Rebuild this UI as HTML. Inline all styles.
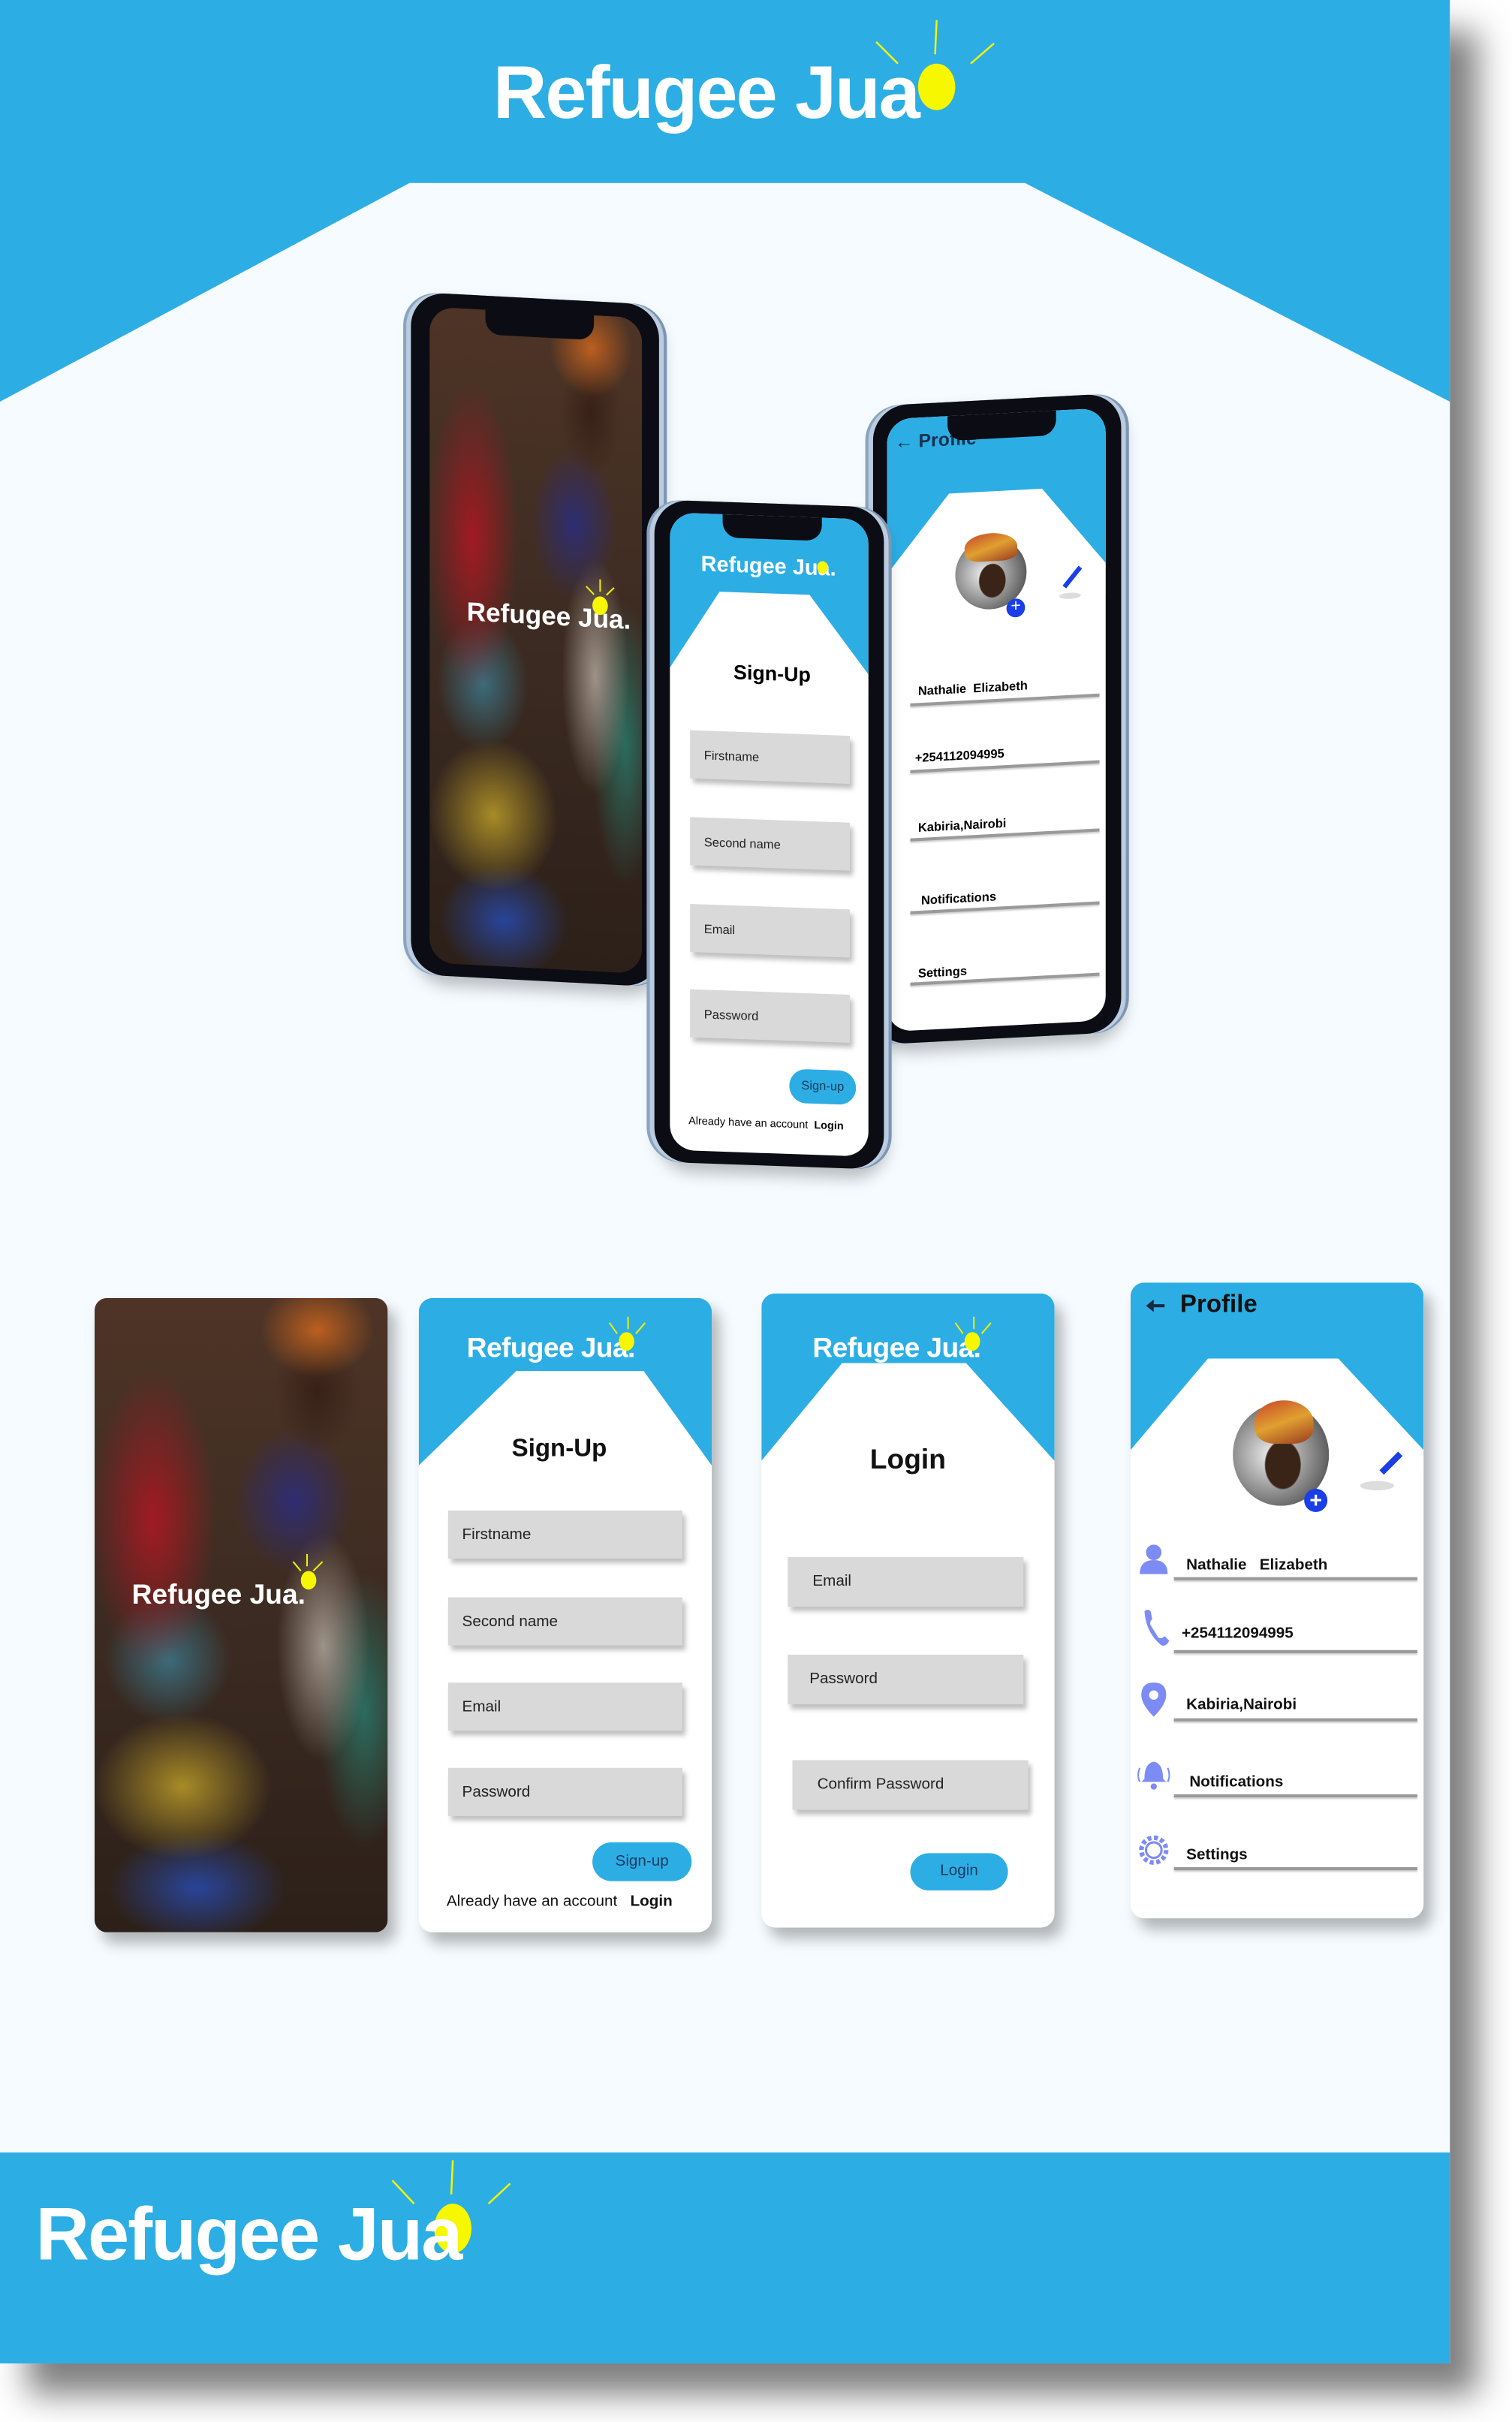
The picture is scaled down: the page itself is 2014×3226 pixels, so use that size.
<!DOCTYPE html>
<html><head><meta charset="utf-8">
<style>
html,body{margin:0;padding:0;background:#fff;width:2014px;height:3226px;overflow:hidden}
#st{position:absolute;left:0;top:0;width:975px;height:1562px;transform:scale(2.0656);transform-origin:0 0;font-family:"Liberation Sans",sans-serif}
.a{position:absolute}
.page{left:0;top:0;width:935px;height:1524px;background:#f5fbfe;box-shadow:18px 20px 20px rgba(0,0,0,.5)}
.card{position:absolute;background:#fff;border-radius:9px;overflow:hidden;box-shadow:5px 7px 9px rgba(0,0,0,.28)}
.t{position:absolute;white-space:nowrap}
.inp{position:absolute;background:#d9d9d9;box-shadow:2px 3px 3px rgba(0,0,0,.25);font-size:10px;color:#222}
.inp span{position:absolute;left:9px;top:50%;transform:translateY(-50%)}
.btn{position:absolute;background:#2caee4;border-radius:14px;color:#1a3a60;font-size:10px;text-align:center}
.phone{position:absolute;border-radius:22px;background:#0c0c14;box-shadow:-3px 0 0 #b9cce0,-5px 0 0 #8aa3c0,3px 0 0 #b9cce0,5px 0 0 #7d95b3,2px 6px 10px rgba(0,0,0,.25)}
.scr{position:absolute;border-radius:16px;overflow:hidden;background:#fff}
.photo{background:
 radial-gradient(ellipse 26% 10% at 76% 5%,rgba(200,100,30,.9),transparent 75%),
 radial-gradient(ellipse 18% 12% at 76% 15%,rgba(55,32,22,1),transparent 80%),
 radial-gradient(ellipse 30% 33% at 20% 35%,rgba(165,25,35,.95),transparent 72%),
 radial-gradient(ellipse 20% 14% at 25% 34%,rgba(75,45,32,1),transparent 80%),
 radial-gradient(ellipse 28% 16% at 68% 32%,rgba(45,45,120,.95),transparent 72%),
 radial-gradient(ellipse 22% 25% at 78% 55%,rgba(175,165,155,.85),transparent 72%),
 radial-gradient(ellipse 30% 14% at 25% 57%,rgba(60,120,140,.85),transparent 72%),
 radial-gradient(ellipse 42% 16% at 30% 77%,rgba(180,150,40,.9),transparent 72%),
 radial-gradient(ellipse 42% 12% at 35% 93%,rgba(40,70,160,.95),transparent 72%),
 radial-gradient(ellipse 22% 30% at 92% 65%,rgba(40,120,105,.85),transparent 72%),
 linear-gradient(#4e3426,#3c2b22 50%,#2c2019) !important;}
.notch{position:absolute;background:#0c0c14;border-radius:0 0 10px 10px}
.ln{position:absolute;height:1.5px;background:#9a9a9a;box-shadow:0 1px 1px rgba(0,0,0,.2)}
</style></head><body>
<div id="st">
<div class="a page"></div>
<svg class="a" style="left:0;top:0" width="935" height="1524">
<rect x="0" y="0" width="935" height="118" fill="#2caee4"/>
<polygon points="0,117 266,117 0,259" fill="#2caee4"/>
<polygon points="659,117 935,117 935,259" fill="#2caee4"/>
<rect x="0" y="1388" width="935" height="136" fill="#2caee4"/>
<line x1="565" y1="27" x2="579" y2="41" stroke="#f5f500" stroke-width="1.2"/>
<line x1="604" y1="13" x2="603" y2="35" stroke="#f5f500" stroke-width="1.2"/>
<line x1="641" y1="28" x2="626" y2="41" stroke="#f5f500" stroke-width="1.2"/>
<ellipse cx="604" cy="56" rx="12" ry="15" fill="#f7f700"/>
<line x1="253" y1="1406" x2="267" y2="1421" stroke="#f5f500" stroke-width="1.2"/>
<line x1="292" y1="1393" x2="291" y2="1415" stroke="#f5f500" stroke-width="1.2"/>
<line x1="329" y1="1408" x2="315" y2="1421" stroke="#f5f500" stroke-width="1.2"/>
<ellipse cx="292" cy="1437" rx="12" ry="16" fill="#f7f700"/>
</svg>
<div class="t" style="left:318px;top:33px;font-size:48px;font-weight:bold;color:#fff;letter-spacing:-1px">Refugee Jua</div>
<div class="t" style="left:23px;top:1414px;font-size:48px;font-weight:bold;color:#fff;letter-spacing:-1px">Refugee Jua</div>

<div style="position:absolute;left:0;top:0;transform:skewY(3deg);transform-origin:262px 188px">
<div class="phone" style="left:265px;top:188px;width:160px;height:440px">
 <div class="scr photo" style="left:12px;top:9px;width:137px;height:423px">
  <div class="t" style="left:24px;top:186px;font-size:17px;font-weight:bold;color:#fff">Refugee Jua.</div>
  <svg class="a" style="left:95px;top:170px" width="30" height="30"><line x1="6" y1="5" x2="11" y2="10" stroke="#ee0" /><line x1="15" y1="0" x2="15" y2="8" stroke="#ee0"/><line x1="24" y1="5" x2="19" y2="10" stroke="#ee0"/><ellipse cx="15" cy="17" rx="5" ry="6" fill="#f7f700"/></svg>
 </div>
 <div class="notch" style="left:48px;top:9px;width:70px;height:16px"></div>
</div>
</div>

<div style="position:absolute;left:0;top:0;transform:skewY(-3deg);transform-origin:560px 260px">
<div class="phone" style="left:563px;top:262px;width:160px;height:412px">
 <div class="scr" style="left:9px;top:9px;width:141px;height:395px">
  <svg class="a" style="left:0;top:0" width="141" height="120"><rect width="141" height="110" fill="#2caee4"/><polygon points="40,50 100,50 141,100 141,120 0,120 0,100" fill="#fff"/></svg>
  <div class="t" style="left:5px;top:8px;font-size:12px;font-weight:bold;color:#1a3050">&#8592; Profile</div>
  <div class="a" style="left:44px;top:80px;width:46px;height:46px;border-radius:50%;background:radial-gradient(ellipse 30% 38% at 52% 60%,#3a2418 60%,transparent 64%),radial-gradient(circle at 40% 50%,#eee,#555 80%);"></div>
  <div class="a" style="left:50px;top:77px;width:34px;height:18px;border-radius:50% 50% 30% 30%;background:linear-gradient(160deg,#c7462a,#e0a030 50%,#9a3a20)"></div>
  <div class="a" style="left:77px;top:120px;width:12px;height:12px;border-radius:50%;background:#1a3ee8;color:#fff;font-size:11px;line-height:11px;text-align:center">+</div>
  <div class="a" style="left:111px;top:118px;width:14px;height:4px;border-radius:50%;background:#ddd"></div>
  <div class="a" style="left:118px;top:100px;width:3px;height:16px;background:#1a3ee8;transform:rotate(40deg)"></div>
  <div class="t" style="left:20px;top:172px;font-size:8px;font-weight:bold">Nathalie &nbsp;Elizabeth</div><div class="ln" style="left:15px;top:184px;width:122px"></div>
  <div class="t" style="left:18px;top:215px;font-size:8px;font-weight:bold">+254112094995</div><div class="ln" style="left:15px;top:227px;width:122px"></div>
  <div class="t" style="left:20px;top:260px;font-size:8px;font-weight:bold">Kabiria,Nairobi</div><div class="ln" style="left:15px;top:271px;width:122px"></div>
  <div class="t" style="left:22px;top:307px;font-size:8px;font-weight:bold">Notifications</div><div class="ln" style="left:15px;top:318px;width:122px"></div>
  <div class="t" style="left:20px;top:354px;font-size:8px;font-weight:bold">Settings</div><div class="ln" style="left:15px;top:364px;width:122px"></div>
 </div>
 <div class="notch" style="left:48px;top:9px;width:70px;height:16px"></div>
</div>
</div>

<div style="position:absolute;left:0;top:0;transform:skewY(2deg);transform-origin:420px 320px">
<div class="phone" style="left:422px;top:322px;width:148px;height:427px">
 <div class="scr" style="left:10px;top:8px;width:128px;height:411px">
  <svg class="a" style="left:0;top:0" width="128" height="110"><rect width="128" height="100" fill="#2caee4"/><polygon points="32,50 90,50 128,100 128,110 0,110 0,100" fill="#fff"/></svg>
  <div class="t" style="left:20px;top:24px;font-size:14px;font-weight:bold;color:#fff">Refugee Jua.</div>
  <div class="a" style="left:95px;top:28px;width:7px;height:8px;border-radius:50%;background:#f7f700"></div>
  <div class="t" style="left:41px;top:94px;font-size:13px;font-weight:bold">Sign-Up</div>
  <div class="inp" style="left:13px;top:140px;width:103px;height:31px;font-size:8px"><span>Firstname</span></div>
  <div class="inp" style="left:13px;top:196px;width:103px;height:31px;font-size:8px"><span>Second name</span></div>
  <div class="inp" style="left:13px;top:252px;width:103px;height:31px;font-size:8px"><span>Email</span></div>
  <div class="inp" style="left:13px;top:307px;width:103px;height:31px;font-size:8px"><span>Password</span></div>
  <div class="btn" style="left:77px;top:356px;width:43px;height:22px;line-height:22px;font-size:8px">Sign-up</div>
  <div class="t" style="left:12px;top:389px;font-size:7px">Already have an account &nbsp;<b>Login</b></div>
 </div>
 <div class="notch" style="left:44px;top:8px;width:64px;height:15px"></div>
</div>
</div>

<div class="card photo" style="left:61px;top:837px;width:189px;height:409px;border-radius:8px">
 <div class="t" style="left:24px;top:181px;font-size:18px;font-weight:bold;color:#fff">Refugee Jua.</div>
 <svg class="a" style="left:122px;top:165px" width="30" height="30"><line x1="6" y1="5" x2="11" y2="11" stroke="#ee0"/><line x1="15" y1="0" x2="15" y2="8" stroke="#ee0"/><line x1="25" y1="5" x2="19" y2="11" stroke="#ee0"/><ellipse cx="16" cy="17" rx="5" ry="6" fill="#f7f700"/></svg>
</div>

<div class="card" style="left:270px;top:837px;width:189px;height:409px">
 <svg class="a" style="left:0;top:0" width="189" height="120"><rect width="189" height="108" fill="#2caee4"/><polygon points="63,47 145,47 189,108 189,120 0,120 0,108" fill="#fff"/></svg>
 <div class="t" style="left:31px;top:22px;font-size:18px;font-weight:bold;color:#fff;letter-spacing:-.3px">Refugee Jua.</div>
 <svg class="a" style="left:118px;top:12px" width="36" height="30"><line x1="5" y1="4" x2="10" y2="11" stroke="#ee0"/><line x1="17" y1="0" x2="17" y2="8" stroke="#ee0"/><line x1="28" y1="4" x2="22" y2="11" stroke="#ee0"/><ellipse cx="16" cy="16" rx="5" ry="6" fill="#f7f700"/></svg>
 <div class="t" style="left:60px;top:89px;font-size:16px;font-weight:bold;color:#111">Sign-Up</div>
 <div class="inp" style="left:19px;top:137px;width:151px;height:31px"><span>Firstname</span></div>
 <div class="inp" style="left:19px;top:193px;width:151px;height:31px"><span>Second name</span></div>
 <div class="inp" style="left:19px;top:248px;width:151px;height:31px"><span>Email</span></div>
 <div class="inp" style="left:19px;top:303px;width:151px;height:31px"><span>Password</span></div>
 <div class="btn" style="left:112px;top:351px;width:64px;height:25px;line-height:25px">Sign-up</div>
 <div class="t" style="left:18px;top:384px;font-size:10px;color:#111">Already have an account &nbsp;&nbsp;<b>Login</b></div>
</div>

<div class="card" style="left:491px;top:834px;width:189px;height:409px">
 <svg class="a" style="left:0;top:0" width="189" height="120"><rect width="189" height="108" fill="#2caee4"/><polygon points="52,45 132,45 189,108 189,120 0,120 0,108" fill="#fff"/></svg>
 <div class="t" style="left:33px;top:25px;font-size:18px;font-weight:bold;color:#fff;letter-spacing:-.3px">Refugee Jua.</div>
 <svg class="a" style="left:120px;top:15px" width="36" height="30"><line x1="5" y1="4" x2="10" y2="11" stroke="#ee0"/><line x1="17" y1="0" x2="17" y2="8" stroke="#ee0"/><line x1="28" y1="4" x2="22" y2="11" stroke="#ee0"/><ellipse cx="16" cy="16" rx="5" ry="6" fill="#f7f700"/></svg>
 <div class="t" style="left:70px;top:97px;font-size:18px;font-weight:bold;color:#111">Login</div>
 <div class="inp" style="left:17px;top:170px;width:152px;height:32px"><span style="left:16px">Email</span></div>
 <div class="inp" style="left:17px;top:233px;width:152px;height:32px"><span style="left:14px">Password</span></div>
 <div class="inp" style="left:20px;top:301px;width:152px;height:32px"><span style="left:16px">Confirm Password</span></div>
 <div class="btn" style="left:96px;top:361px;width:63px;height:24px;line-height:24px">Login</div>
</div>

<div class="card" style="left:729px;top:827px;width:189px;height:410px">
 <svg class="a" style="left:0;top:0" width="189" height="120"><rect width="189" height="108" fill="#2caee4"/><polygon points="50,49 134,49 189,108 189,120 0,120 0,108" fill="#fff"/></svg>
 <svg class="a" style="left:9px;top:10px" width="14" height="10"><path d="M1 5 L6 1 V4 H13 V6 H6 V9 Z" fill="#1a2a40"/></svg>
 <div class="t" style="left:32px;top:6px;font-size:16px;font-weight:bold;color:#111">Profile</div>
 <div class="a" style="left:66px;top:78px;width:62px;height:66px;border-radius:50%;background:radial-gradient(ellipse 30% 38% at 52% 60%,#3a2418 60%,transparent 64%),radial-gradient(circle at 40% 50%,#eee,#555 80%)"></div>
 <div class="a" style="left:80px;top:76px;width:38px;height:28px;border-radius:50% 50% 35% 35%;background:linear-gradient(160deg,#c7462a,#e0a030 50%,#9a3a20)"></div>
 <div class="a" style="left:112px;top:133px;width:15px;height:15px;border-radius:50%;background:#1a3ee8;color:#fff;font-size:14px;line-height:14px;text-align:center;font-weight:bold">+</div>
 <div class="a" style="left:148px;top:128px;width:22px;height:6px;border-radius:50%;background:#ddd"></div>
 <div class="a" style="left:166px;top:108px;width:4px;height:17px;background:#1a3ee8;transform:rotate(45deg)"></div>
 <svg class="a" style="left:4px;top:168px" width="22" height="210">
  <circle cx="11" cy="6" r="5" fill="#7d8bf5"/><path d="M2 20 Q2 11 11 11 Q20 11 20 20 Z" fill="#7d8bf5"/>
  <path d="M5 44 q2-2 4 0 l1 5 q-2 2-1 4 l5 8 q2 1 4-1 l3 3 q-2 4-5 3 q-10-8-11-22z" fill="#7d8bf5"/>
  <path d="M11 90 q8 0 8 8 q0 6-8 14 q-8-8-8-14 q0-8 8-8z" fill="#7d8bf5"/><circle cx="11" cy="98" r="3" fill="#fff"/>
  <path d="M5 152 q0-10 6-11 q6 1 6 11 l2 2 h-16z" fill="#7d8bf5"/><circle cx="11" cy="157" r="2" fill="#7d8bf5"/><path d="M2 145 q-2 5 0 9 M20 145 q2 5 0 9" stroke="#7d8bf5" fill="none"/>
  <circle cx="11" cy="198" r="8" fill="none" stroke="#7d8bf5" stroke-width="3" stroke-dasharray="2.5 1.7"/>
  <circle cx="11" cy="198" r="5" fill="none" stroke="#7d8bf5" stroke-width="1.5"/>
 </svg>
 <div class="t" style="left:36px;top:177px;font-size:10px;font-weight:bold;color:#111">Nathalie &nbsp;&nbsp;Elizabeth</div><div class="ln" style="left:28px;top:190px;width:157px"></div>
 <div class="t" style="left:33px;top:221px;font-size:10px;font-weight:bold;color:#111">+254112094995</div><div class="ln" style="left:28px;top:237px;width:157px"></div>
 <div class="t" style="left:36px;top:267px;font-size:10px;font-weight:bold;color:#111">Kabiria,Nairobi</div><div class="ln" style="left:28px;top:281px;width:157px"></div>
 <div class="t" style="left:38px;top:317px;font-size:10px;font-weight:bold;color:#111">Notifications</div><div class="ln" style="left:28px;top:330px;width:157px"></div>
 <div class="t" style="left:36px;top:364px;font-size:10px;font-weight:bold;color:#111">Settings</div><div class="ln" style="left:28px;top:377px;width:157px"></div>
</div>
</div>
</body></html>
